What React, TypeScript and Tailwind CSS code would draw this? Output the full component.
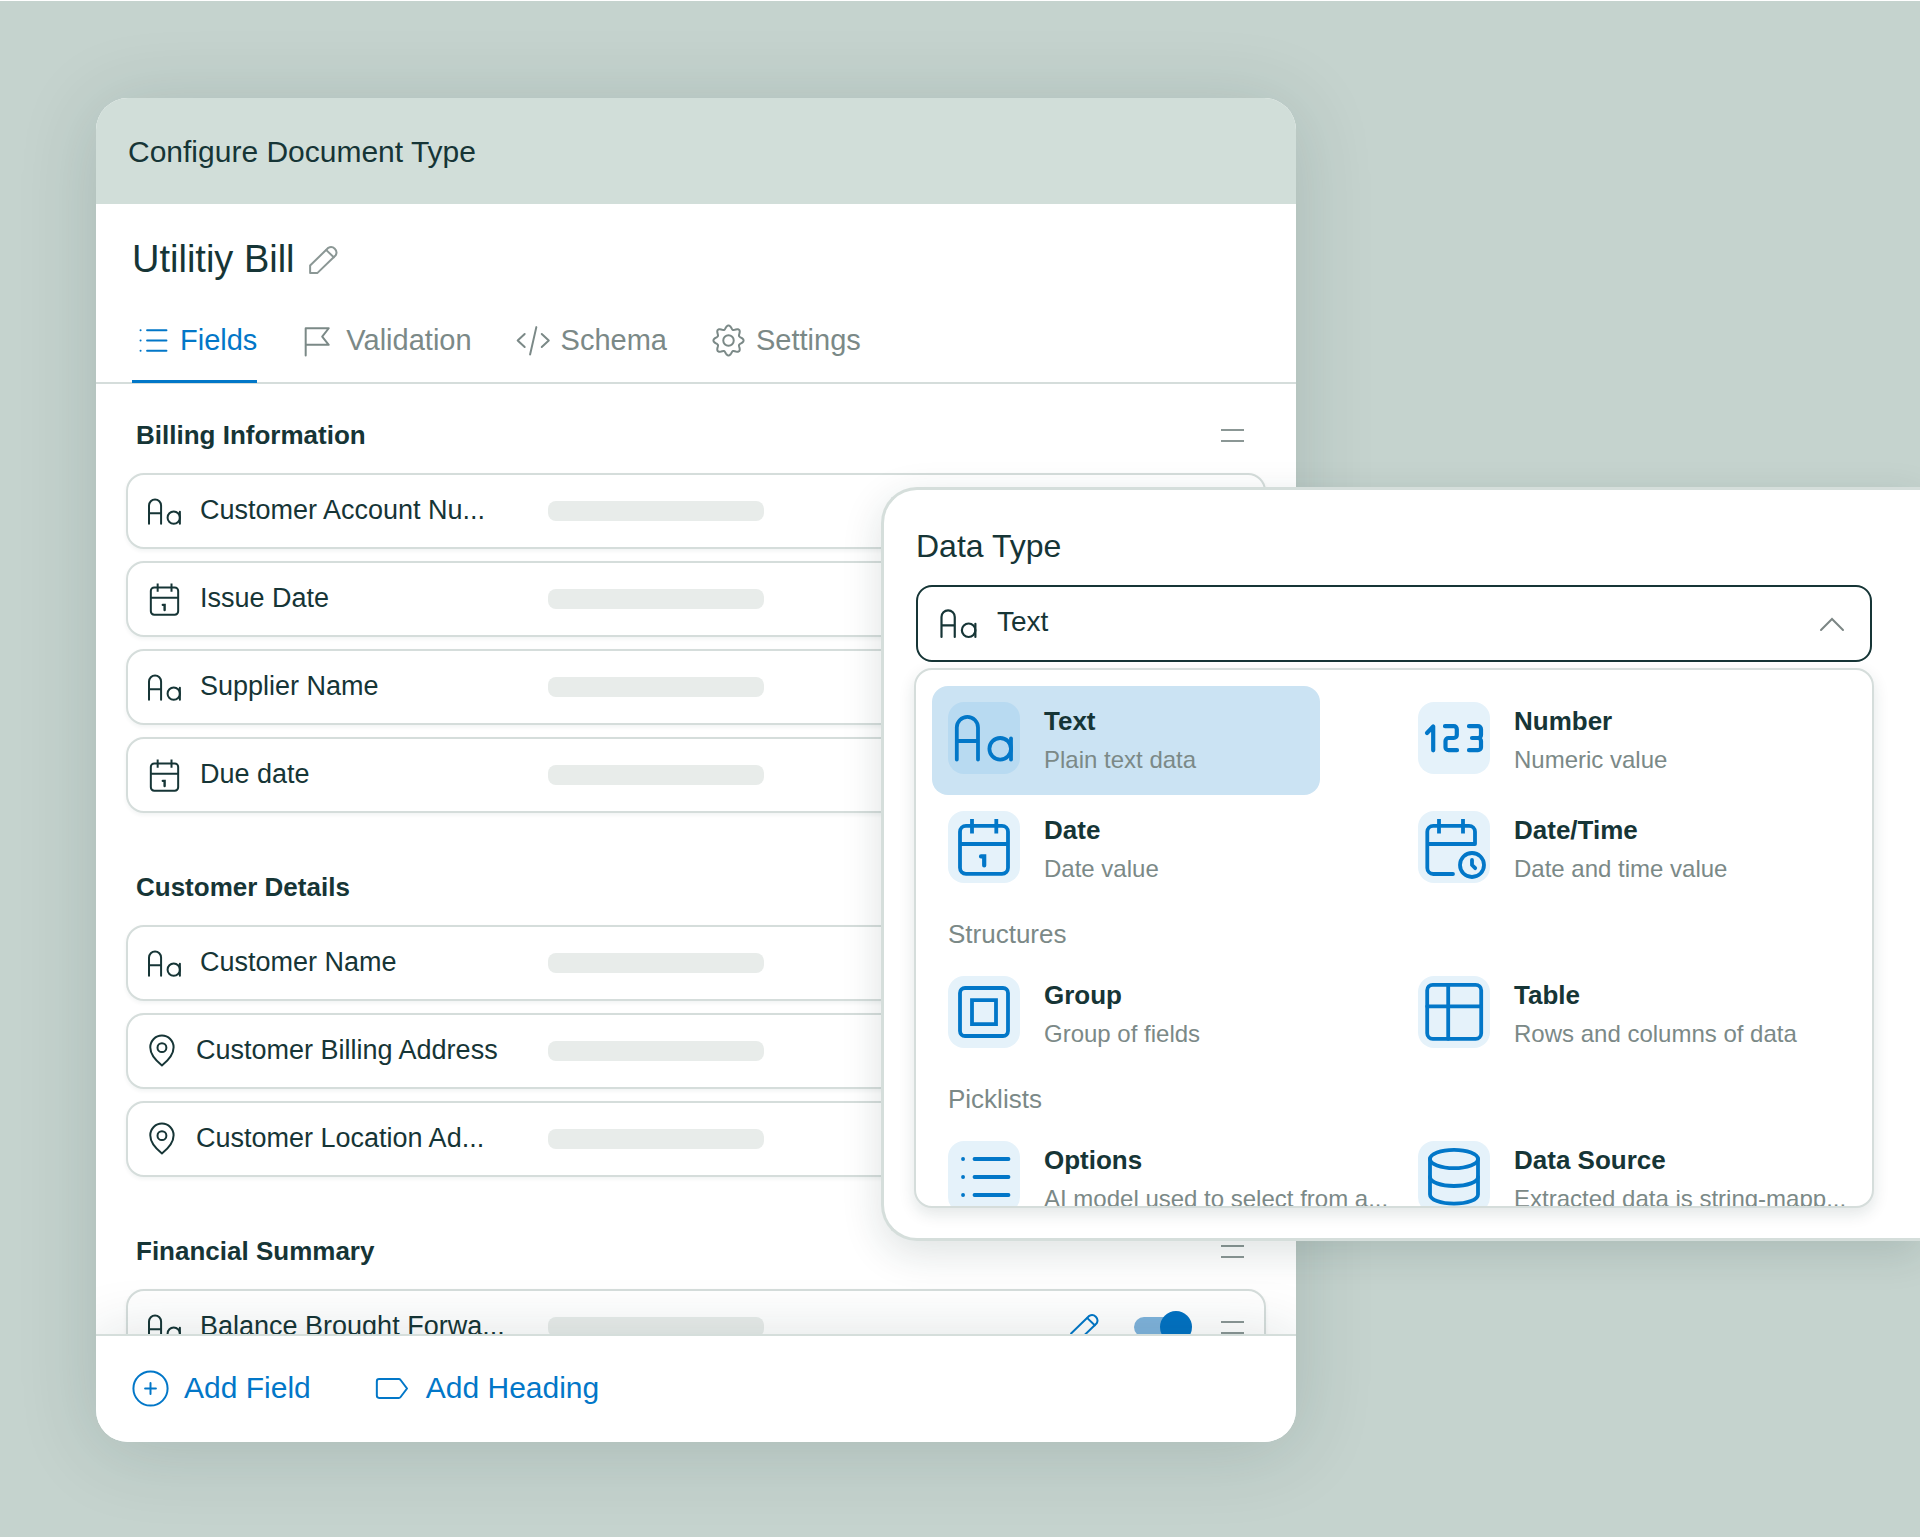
import { ReactNode, useState } from "react";

type IconName =
  | "text"
  | "date"
  | "datetime"
  | "number"
  | "group"
  | "table"
  | "list"
  | "database"
  | "pin"
  | "flag"
  | "code"
  | "gear"
  | "pencil"
  | "plus"
  | "tag";

// Eight soft teeth around a circle
const gearPath =
  Array.from({ length: 96 }, (_, i) => {
    const angle = (i / 96) * Math.PI * 2;
    const wave = Math.cos(angle * 8);
    const radius = 23.3 + 3.2 * wave;
    const x = (36 + radius * Math.cos(angle)).toFixed(2);
    const y = (36 + radius * Math.sin(angle)).toFixed(2);
    return `${i === 0 ? "M" : "L"}${x} ${y}`;
  }).join("") + "Z";

const shapes: Record<IconName, ReactNode> = {
  text: (
    <>
      <path d="M8.8 57.5V25.5a10.6 10.6 0 0 1 21.2 0V57.5M8.8 39H30" />
      <circle cx="52.2" cy="46.8" r="10.8" />
      <path d="M63 36.5v21" />
    </>
  ),
  date: (
    <>
      <rect x="12" y="14.8" width="48" height="48" rx="6" />
      <path d="M12 33h48M24 8v14.5M48.3 8v14.5" strokeLinecap="butt" />
      <path d="M33 45.4h3.2v9" strokeWidth="4.2" strokeLinejoin="miter" />
    </>
  ),
  datetime: (
    <>
      <path d="M35 63H15.3a6 6 0 0 1-6-6V20.8a6 6 0 0 1 6-6H51a6 6 0 0 1 6 6V33H9.3" />
      <path d="M21 8v14.5M45 8v14.5" strokeLinecap="butt" />
      <circle cx="54" cy="54" r="12" />
      <path d="M54 49v5l3.2 3.2" />
    </>
  ),
  number: (
    <g strokeWidth="4.2">
      <path d="M9 31l6.2-6.5v23.8" />
      <path d="M27 24.2h8.8a3 3 0 0 1 3 3V33a3 3 0 0 1-3 3H30.500a3 3 0 0 0-3 3v6.2a3 3 0 0 0 3 3h8.500" />
      <path d="M51 24.2h9a3 3 0 0 1 3 3v5.8a3 3 0 0 1-3 3h-6M60 36a3 3 0 0 1 3 3v6.2a3 3 0 0 1-3 3h-9" />
    </g>
  ),
  group: (
    <>
      <rect x="12" y="12" width="48" height="48" rx="5" />
      <path d="M24 24.2h24v24H24z" strokeLinejoin="miter" />
    </>
  ),
  table: (
    <>
      <rect x="9.2" y="8.8" width="54" height="54" rx="5.5" />
      <path d="M30.2 8.8v54M9.2 30.3h54" />
    </>
  ),
  list: (
    <>
      <path d="M26.5 18h34M26.5 36h34M26.5 54h34" />
      <path d="M15 18h.1M15 36h.1M15 54h.1" />
    </>
  ),
  database: (
    <>
      <ellipse cx="36" cy="18" rx="24" ry="9.2" />
      <path d="M12 18v35.5c0 5.2 10.7 9.2 24 9.2s24-4 24-9.2V18" />
      <path d="M12 36c0 5 10.7 9 24 9s24-4 24-9" />
    </>
  ),
  pin: (
    <>
      <path d="M31.5 60.5C19.5 51 11 41 11 28.6a20.5 20.5 0 0 1 41 0C52 41 43.5 51 31.5 60.5z" />
      <circle cx="31.5" cy="29.2" r="7.8" />
    </>
  ),
  flag: <path d="M13.5 62.5v-48H54L42.5 29.2 54 43.5H13.5" />,
  code: <path d="M20.5 24.5L8.2 36l12.3 11.5M50.5 24.5L62.800 36 50.5 47.5M41 12.5L30 60.5" />,
  gear: (
    <>
      <path d={gearPath} />
      <circle cx="36" cy="36" r="9.2" />
    </>
  ),
  pencil: (
    <>
      <path d="M12.5 59.5V46.5L44.5 15.5a9.6 9.6 0 0 1 13 13L25.5 59.5z" />
      <path d="M41 19.5L54 32" />
    </>
  ),
  plus: (
    <>
      <circle cx="36" cy="36" r="30" />
      <path d="M36 26.5v19M26.5 36h19" />
    </>
  ),
  tag: <path d="M12.5 19.5H47a4 4 0 0 1 3.2 1.6L61.5 36 50.2 50.9a4 4 0 0 1-3.2 1.6H12.5a4 4 0 0 1-4-4v-25a4 4 0 0 1 4-4z" />
};

function Icon({
  name,
  className = "size-[41px]",
  strokeWidth = 3.5
}: {
  name: IconName;
  className?: string;
  strokeWidth?: number;
}) {
  return (
    <svg
      viewBox="0 0 72 72"
      fill="none"
      stroke="currentColor"
      strokeWidth={strokeWidth}
      strokeLinecap="round"
      strokeLinejoin="round"
      aria-hidden="true"
      className={`shrink-0 ${className}`}
    >
      {shapes[name]}
    </svg>
  );
}

function DragHandle({ label }: { label: string }) {
  return (
    <button
      type="button"
      aria-label={label}
      className="flex h-[13px] w-[23px] shrink-0 flex-col justify-between"
    >
      <span className="h-0.5 w-full bg-[#8b9795]" />
      <span className="h-0.5 w-full bg-[#8b9795]" />
    </button>
  );
}

type Field = { icon: IconName; name: string };

const sections: { title: string; fields: Field[] }[] = [
  {
    title: "Billing Information",
    fields: [
      { icon: "text", name: "Customer Account Nu..." },
      { icon: "date", name: "Issue Date" },
      { icon: "text", name: "Supplier Name" },
      { icon: "date", name: "Due date" }
    ]
  },
  {
    title: "Customer Details",
    fields: [
      { icon: "text", name: "Customer Name" },
      { icon: "pin", name: "Customer Billing Address" },
      { icon: "pin", name: "Customer Location Ad..." }
    ]
  },
  {
    title: "Financial Summary",
    fields: [{ icon: "text", name: "Balance Brought Forwa..." }]
  }
];

const tabs: { icon: IconName; name: string }[] = [
  { icon: "list", name: "Fields" },
  { icon: "flag", name: "Validation" },
  { icon: "code", name: "Schema" },
  { icon: "gear", name: "Settings" }
];

type DataType = { icon: IconName; name: string; description: string };

const typeGroups: { title?: string; types: DataType[] }[] = [
  {
    types: [
      { icon: "text", name: "Text", description: "Plain text data" },
      { icon: "number", name: "Number", description: "Numeric value" },
      { icon: "date", name: "Date", description: "Date value" },
      { icon: "datetime", name: "Date/Time", description: "Date and time value" }
    ]
  },
  {
    title: "Structures",
    types: [
      { icon: "group", name: "Group", description: "Group of fields" },
      { icon: "table", name: "Table", description: "Rows and columns of data" }
    ]
  },
  {
    title: "Picklists",
    types: [
      { icon: "list", name: "Options", description: "AI model used to select from a..." },
      { icon: "database", name: "Data Source", description: "Extracted data is string-mapp..." }
    ]
  }
];

function FieldRow({ field }: { field: Field }) {
  return (
    <li className="flex h-[76px] items-center rounded-[18px] border-2 border-[#d5dddb] bg-white pr-5 pl-4 shadow-[0_2px_4px_rgba(20,50,50,0.06)]">
      <div
        className={`flex w-[404px] shrink-0 items-center ${
          field.icon === "pin" ? "gap-[11px]" : "gap-[15px]"
        }`}
      >
        <Icon name={field.icon} />
        <span className="pb-0.5 text-[27px] leading-9 whitespace-nowrap">{field.name}</span>
      </div>
      <div className="h-5 w-[216px] rounded-lg bg-[#e8ecea]" />
      <button type="button" aria-label={`Edit ${field.name}`} className="mr-[29px] ml-auto text-[#0277c8]">
        <Icon name="pencil" />
      </button>
      <label className="relative mr-[29px] flex h-8 w-[58px] shrink-0 items-center">
        <input
          type="checkbox"
          role="switch"
          defaultChecked
          aria-label={`Enable ${field.name}`}
          className="peer h-5 w-[52px] appearance-none rounded-full bg-[#b9c4c1] checked:bg-[#7fb3dc]"
        />
        <span className="absolute top-0 left-0 size-8 rounded-full bg-[#8b9795] peer-checked:left-auto peer-checked:right-0 peer-checked:bg-[#0272c3]" />
      </label>
      <DragHandle label={`Move ${field.name}`} />
    </li>
  );
}

function TypeOption({
  type,
  selected,
  onSelect
}: {
  type: DataType;
  selected: boolean;
  onSelect: () => void;
}) {
  return (
    <button
      type="button"
      role="option"
      aria-selected={selected}
      onClick={onSelect}
      className={`flex h-[109px] items-start gap-6 rounded-2xl p-4 text-left ${
        selected ? "mr-[82px] bg-[#cbe3f3]" : ""
      }`}
    >
      <span className={`rounded-2xl text-[#0277c8] ${selected ? "bg-[#b8daf1]" : "bg-[#e5f2fa]"}`}>
        <Icon name={type.icon} className="size-[72px]" strokeWidth={3.8} />
      </span>
      <span className="flex flex-col gap-[7px] pt-[3px] whitespace-nowrap">
        <span className="text-[26px] leading-8 font-bold">{type.name}</span>
        <span className="text-2xl leading-8 text-[#7b8987]">{type.description}</span>
      </span>
    </button>
  );
}

function DataTypePicker() {
  const [value, setValue] = useState("Text");
  const current = typeGroups.flatMap((group) => group.types).find((type) => type.name === value);

  return (
    <section className="absolute top-[486px] right-0 left-[881px] rounded-l-[36px] border-[3px] border-r-0 border-[#d5dedb] bg-white pt-[38px] pr-[46px] pb-[30px] pl-[30px] shadow-[0_12px_40px_rgba(20,50,50,0.14)]">
      <div className="px-0.5">
        <label htmlFor="data-type" className="block text-[32px] leading-9">
          Data Type
        </label>
        <div className="mt-[21px] flex h-[77px] items-center rounded-2xl border-2 border-[#163536] pr-6 pl-[18px]">
          <Icon name={current ? current.icon : "text"} className="size-[45px]" />
          <select
            id="data-type"
            value={value}
            onChange={(event) => setValue(event.target.value)}
            className="ml-4 h-full flex-1 appearance-none bg-transparent pb-1 text-[28px] outline-none"
          >
            {typeGroups.flatMap((group) =>
              group.types.map((type) => <option key={type.name}>{type.name}</option>)
            )}
          </select>
          <svg
            viewBox="0 0 28 16"
            fill="none"
            stroke="#7c8685"
            strokeWidth="2"
            strokeLinecap="round"
            aria-hidden="true"
            className="h-4 w-7"
          >
            <path d="M3 14L14 3l11 11" />
          </svg>
        </div>
      </div>
      <div
        role="listbox"
        aria-label="Data types"
        className="mt-1.5 h-[540px] overflow-hidden rounded-[18px] border-2 border-[#d5dddb] bg-white pt-4 pl-4 shadow-[0_6px_16px_rgba(20,50,50,0.12)]"
      >
        {typeGroups.map((group) => (
          <div key={group.types[0].name} role="group" aria-label={group.title}>
            {group.title && (
              <h3 className="pt-3.5 pb-2.5 pl-4 text-[26px] leading-8 text-[#7b8987]">{group.title}</h3>
            )}
            <div className="grid grid-cols-2">
              {group.types.map((type) => (
                <TypeOption
                  key={type.name}
                  type={type}
                  selected={type.name === value}
                  onSelect={() => setValue(type.name)}
                />
              ))}
            </div>
          </div>
        ))}
      </div>
    </section>
  );
}

export default function App() {
  const [activeTab, setActiveTab] = useState("Fields");

  return (
    <main className="relative min-h-screen overflow-hidden border-t border-white bg-[#c5d3ce] px-24 pt-[97px] pb-[95px] font-['Liberation_Sans',Arial,sans-serif] text-[#163536]">
      <div className="max-w-[1200px] overflow-hidden rounded-[32px] bg-white shadow-[0_8px_80px_rgba(20,50,50,0.16)]">
        <header className="flex h-[106px] items-center bg-[#d1ded9] px-8 pt-0.5">
          <h1 className="text-3xl">Configure Document Type</h1>
        </header>

        <div className="flex items-center gap-2 px-9 pt-[31px]">
          <h2 className="text-[38px] leading-12">Utilitiy Bill</h2>
          <button type="button" aria-label="Edit name" className="text-[#8b9795]">
            <Icon name="pencil" />
          </button>
        </div>

        <nav role="tablist" className="mt-[37px] flex gap-[41px] border-b-2 border-[#d5dddb] px-9">
          {tabs.map((tab) => (
            <button
              key={tab.name}
              type="button"
              role="tab"
              aria-selected={tab.name === activeTab}
              onClick={() => setActiveTab(tab.name)}
              className={`-mb-px flex items-center gap-[7px] border-b-3 pb-[19px] text-[29px] ${
                tab.name === activeTab
                  ? "border-[#0277c8] text-[#0277c8]"
                  : "border-transparent text-[#7b8987]"
              }`}
            >
              <Icon name={tab.icon} />
              <span className="pb-0.5 leading-9">{tab.name}</span>
            </button>
          ))}
        </nav>

        <div className="flex h-[950px] flex-col gap-[58px] overflow-hidden px-[30px] pt-[35px]">
          {sections.map((section) => (
            <section key={section.title}>
              <div className="flex items-center justify-between pr-[22px] pl-2.5">
                <h3 className="text-[26px] leading-8 font-bold">{section.title}</h3>
                <DragHandle label={`Move ${section.title}`} />
              </div>
              <ul className="mt-[22px] flex flex-col gap-3">
                {section.fields.map((field) => (
                  <FieldRow key={field.name} field={field} />
                ))}
              </ul>
            </section>
          ))}
        </div>

        <footer className="relative flex h-[108px] items-center gap-[61px] border-t-2 border-[#d5dedb] bg-white px-[34px] pb-0.5 text-3xl text-[#0277c8] shadow-[0_0_60px_rgba(20,50,50,0.14)]">
          <button type="button" className="flex items-center gap-[13px]">
            <Icon name="plus" />
            Add Field
          </button>
          <button type="button" className="flex items-center gap-[13px]">
            <Icon name="tag" />
            Add Heading
          </button>
        </footer>
      </div>

      <DataTypePicker />
    </main>
  );
}
